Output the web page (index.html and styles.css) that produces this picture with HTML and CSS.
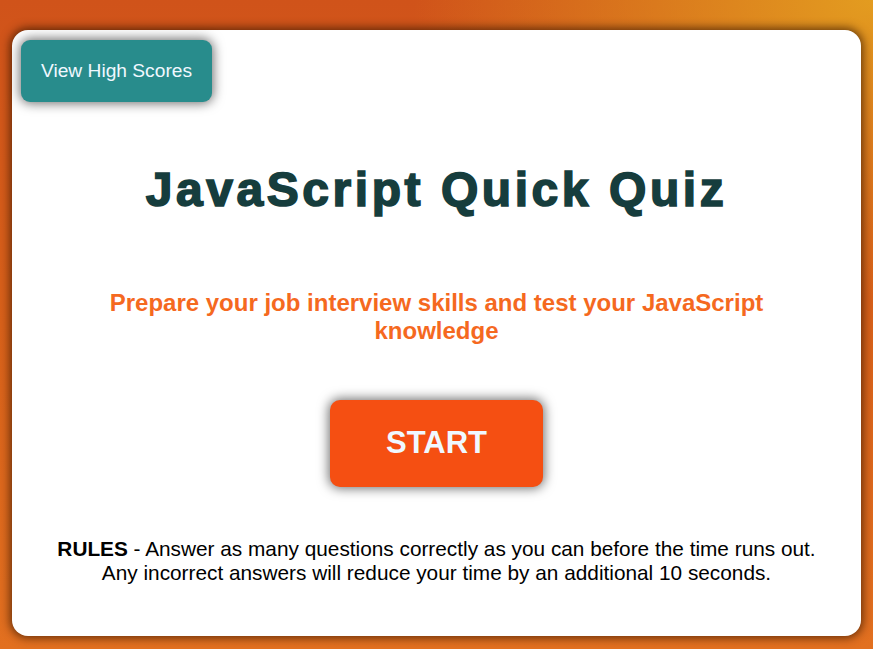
FILE: index.html
```html
<!DOCTYPE html>
<html lang="en">
<head>
<meta charset="utf-8">
<title>JavaScript Quick Quiz</title>
<link rel="stylesheet" href="styles.css">
</head>
<body>
  <main class="card">
    <header class="top-bar">
      <button class="btn-scores" type="button">View High Scores</button>
    </header>
    <section class="intro">
      <h1 class="title">JavaScript Quick Quiz</h1>
      <p class="subtitle">Prepare your job interview skills and test your JavaScript knowledge</p>
      <button class="btn-start" type="button">START</button>
      <p class="rules"><strong>RULES</strong> - Answer as many questions correctly as you can before the time runs out. Any incorrect answers will reduce your time by an additional 10 seconds.</p>
    </section>
  </main>
</body>
</html>
```

FILE: styles.css
```css
html, body {
  margin: 0;
  height: 100%;
}

body {
  box-sizing: border-box;
  padding: 30px 12px 13px 12px;
  font-family: "Liberation Sans", Arial, sans-serif;
  background:
    radial-gradient(ellipse 460px 300px at 100% 0%, rgba(228, 160, 32, 0.95), rgba(228, 160, 32, 0) 100%),
    linear-gradient(180deg, #d0531a 0%, #d8611a 50%, #e27020 100%);
  overflow: hidden;
}

.card {
  box-sizing: border-box;
  height: 606px;
  background: #ffffff;
  border-radius: 16px;
  box-shadow: 0 0 10px 2px rgba(60, 25, 0, 0.75);
  padding: 10px 9px;
  display: flex;
  flex-direction: column;
}

.top-bar {
  display: flex;
}

.btn-scores {
  width: 191px;
  height: 62px;
  border: none;
  border-radius: 9px;
  background: #288c8c;
  color: #f0f8ff;
  font-family: inherit;
  font-size: 19.2px;
  box-shadow: 0 0 12px 1px rgba(0, 0, 0, 0.6);
  cursor: pointer;
}

.intro {
  display: flex;
  flex-direction: column;
  align-items: center;
  text-align: center;
}

.title {
  margin: 59px 0 0 0;
  font-size: 48px;
  line-height: 57.6px;
  font-weight: bold;
  letter-spacing: 3.55px;
  color: #163d3d;
  -webkit-text-stroke: 1.6px #163d3d;
}

.subtitle {
  margin: 70px 0 0 0;
  max-width: 700px;
  font-size: 24px;
  line-height: 28px;
  font-weight: bold;
  color: #f5691f;
}

.btn-start {
  margin-top: 55px;
  width: 213px;
  height: 87px;
  border: none;
  border-radius: 10px;
  background: #f54f12;
  color: #f0f8ff;
  font-family: inherit;
  font-size: 31px;
  font-weight: bold;
  box-shadow: 0 0 12px 1px rgba(0, 0, 0, 0.6);
  cursor: pointer;
}

.rules {
  margin: 50px 0 0 0;
  max-width: 772px;
  font-size: 20.8px;
  line-height: 24px;
  color: #000000;
}

.rules strong {
  font-weight: bold;
}
```
